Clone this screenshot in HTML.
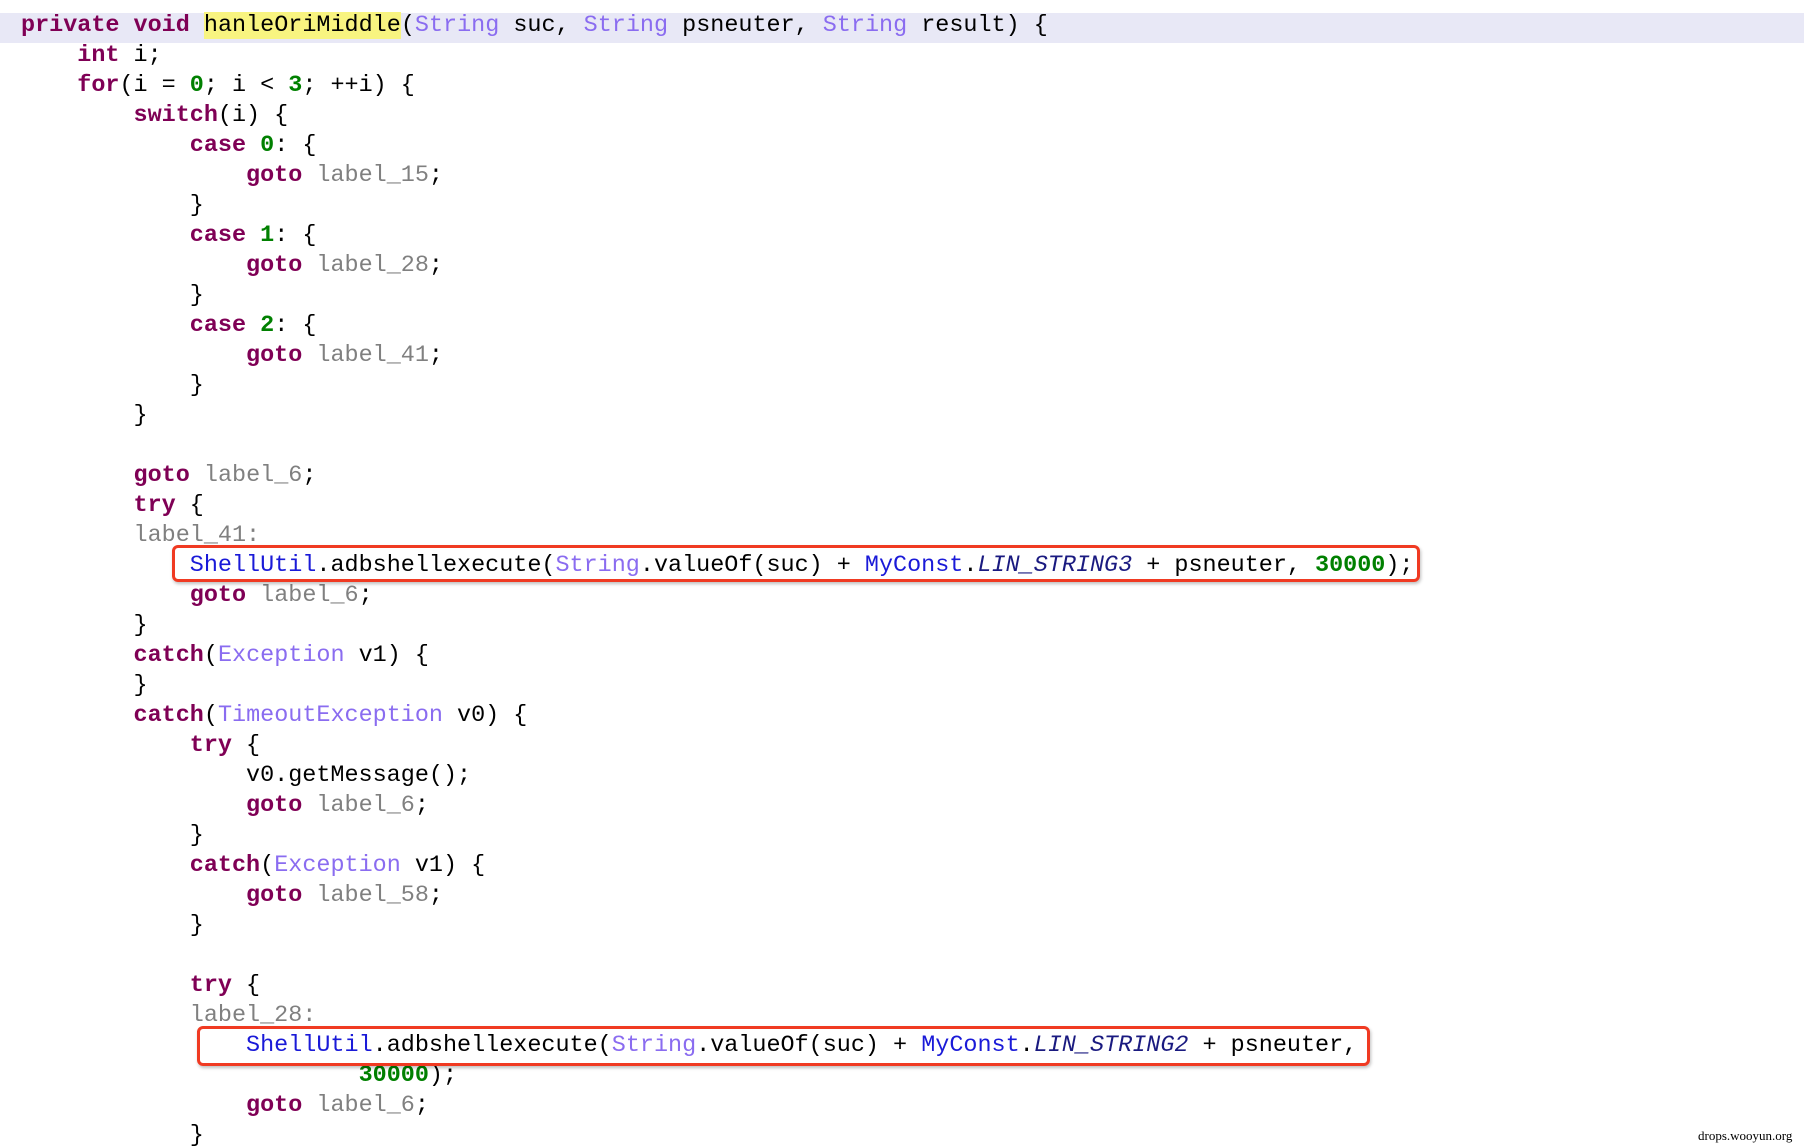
<!DOCTYPE html>
<html><head><meta charset="utf-8"><style>
html,body{margin:0;padding:0;background:#fff;width:1804px;height:1148px;overflow:hidden;position:relative}
.hl{position:absolute;left:0;top:13px;width:1804px;height:30px;background:#e8e8f6}
pre{position:absolute;left:21px;top:11px;margin:0;font-family:"Liberation Mono",monospace;font-size:23.45px;line-height:30px;color:#000}
.k{color:#7f0055;font-weight:bold}
.t{color:#8a6cf0}
.n{color:#008000;font-weight:bold}
.l{color:#808080}
.b{color:#1a1ad8}
.i{color:#1a1a80;font-style:italic}
.y{background:#f8f480}
.box{position:absolute;border:3.5px solid #f03a22;border-radius:6px;box-shadow:1px 2px 3px rgba(0,0,0,.25)}
.wm{position:absolute;left:1698px;top:1128px;font-family:"Liberation Serif",serif;font-size:13px;color:#000}
</style></head><body>
<div class="hl"></div>
<pre><span class="k">private</span> <span class="k">void</span> <span class="y">hanleOriMiddle</span>(<span class="t">String</span> suc, <span class="t">String</span> psneuter, <span class="t">String</span> result) {
    <span class="k">int</span> i;
    <span class="k">for</span>(i = <span class="n">0</span>; i &lt; <span class="n">3</span>; ++i) {
        <span class="k">switch</span>(i) {
            <span class="k">case</span> <span class="n">0</span>: {
                <span class="k">goto</span> <span class="l">label_15</span>;
            }
            <span class="k">case</span> <span class="n">1</span>: {
                <span class="k">goto</span> <span class="l">label_28</span>;
            }
            <span class="k">case</span> <span class="n">2</span>: {
                <span class="k">goto</span> <span class="l">label_41</span>;
            }
        }

        <span class="k">goto</span> <span class="l">label_6</span>;
        <span class="k">try</span> {
        <span class="l">label_41:</span>
            <span class="b">ShellUtil</span>.adbshellexecute(<span class="t">String</span>.valueOf(suc) + <span class="b">MyConst</span>.<span class="i">LIN_STRING3</span> + psneuter, <span class="n">30000</span>);
            <span class="k">goto</span> <span class="l">label_6</span>;
        }
        <span class="k">catch</span>(<span class="t">Exception</span> v1) {
        }
        <span class="k">catch</span>(<span class="t">TimeoutException</span> v0) {
            <span class="k">try</span> {
                v0.getMessage();
                <span class="k">goto</span> <span class="l">label_6</span>;
            }
            <span class="k">catch</span>(<span class="t">Exception</span> v1) {
                <span class="k">goto</span> <span class="l">label_58</span>;
            }

            <span class="k">try</span> {
            <span class="l">label_28:</span>
                <span class="b">ShellUtil</span>.adbshellexecute(<span class="t">String</span>.valueOf(suc) + <span class="b">MyConst</span>.<span class="i">LIN_STRING2</span> + psneuter,
                        <span class="n">30000</span>);
                <span class="k">goto</span> <span class="l">label_6</span>;
            }</pre>
<div class="box" style="left:172px;top:545px;width:1242px;height:31px"></div>
<div class="box" style="left:197px;top:1026px;width:1167px;height:34px"></div>
<div class="wm">drops.wooyun.org</div>
</body></html>
